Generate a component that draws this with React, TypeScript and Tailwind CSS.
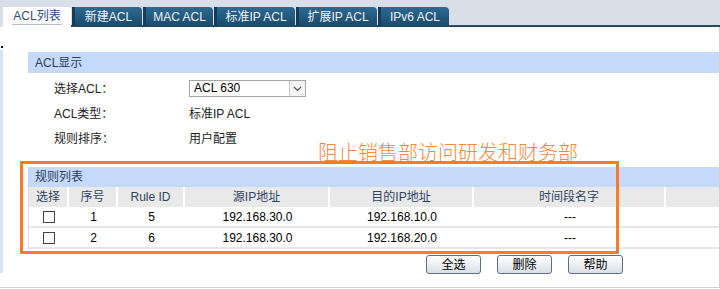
import React from "react";

const FONT = { fontFamily: '"Liberation Sans", "Noto Sans CJK SC", sans-serif' };

const TABS = [
  { label: "新建ACL", w: "w-[70px]" },
  { label: "MAC ACL", w: "w-[70px]" },
  { label: "标准IP ACL", w: "w-[81px]" },
  { label: "扩展IP ACL", w: "w-[81px]" },
  { label: "IPv6 ACL", w: "w-[71px]" },
];

const COLS = [
  { label: "选择", w: "w-[40px]" },
  { label: "序号", w: "w-[49px]" },
  { label: "Rule ID", w: "w-[67px]" },
  { label: "源IP地址", w: "w-[145px]" },
  { label: "目的IP地址", w: "w-[144px]" },
  { label: "时间段名字", w: "w-[192px]" },
  { label: "", w: "flex-1" },
];

const RULES = [
  { no: "1", id: "5", src: "192.168.30.0", dst: "192.168.10.0", time: "---" },
  { no: "2", id: "6", src: "192.168.30.0", dst: "192.168.20.0", time: "---" },
];

function Button({ children }: { children: React.ReactNode }) {
  return (
    <button className="w-[55px] h-[19px] rounded-[3px] border border-[#5b6f86] bg-gradient-to-b from-white to-[#d9dfe6] text-[12px] text-black leading-none shadow-[inset_0_1px_0_#fff]">
      {children}
    </button>
  );
}

export default function App() {
  return (
    <div className="w-[720px] h-[289px] bg-white text-[12px] text-[#222] overflow-hidden" style={FONT}>
      {/* Tabs */}
      <div className="flex items-end h-[27px] bg-[#d9dfe8] pl-[3px]">
        <div className="w-[68px] h-[20px] bg-white flex flex-col items-center justify-center text-[#2b4a78] rounded-tr-[3px]">
          <span className="border-b border-[#b9bfc8] leading-[15px] px-[1px]">ACL列表</span>
        </div>
        <div className="flex-1 flex items-end border-b-2 border-[#274a63] h-[20px]">
          <div className="flex gap-[1px] pl-[1px] h-[19px] -mb-[1px]">
            {TABS.map((t) => (
              <div
                key={t.label}
                className={`${t.w} h-full flex items-center justify-center text-[#eef3f8] bg-gradient-to-b from-[#2e6a93] to-[#1a4a6b] rounded-tr-[4px] border-l-[3px] border-[#163c57]`}
              >
                {t.label}
              </div>
            ))}
          </div>
        </div>
      </div>

      {/* Content */}
      <div className="relative flex h-[261px] border-r border-b border-[#d2d2d2]">
        <div className="w-[3px] flex flex-col">
          <div className="w-[2px] h-[2px] bg-black mt-[19px] ml-[1px]" />
          <div className="w-[3px] h-[223px] bg-[#d6e4fb] mt-[2px]" />
        </div>

        <div className="flex-1 pl-[25px]">
          <div className="mt-[25px] h-[21px] bg-[#c5d9fa] flex items-center pl-[7px] text-[#2a3e58]">ACL显示</div>

          <div className="mt-[3px] pl-[26px]">
            <div className="flex items-center h-[25px]">
              <span className="w-[135px]">选择ACL：</span>
              <div className="flex w-[117px] h-[17px] border border-[#a5a5a5] bg-white">
                <span className="flex-1 pl-[4px] leading-[15px] text-black">ACL 630</span>
                <span className="w-[16px] border-l border-[#c8c8c8] bg-[#f4f4f4] flex items-center justify-center">
                  <svg width="9" height="6" viewBox="0 0 9 6">
                    <path d="M1 1 L4.5 4.5 L8 1" fill="none" stroke="#555" strokeWidth="1.2" />
                  </svg>
                </span>
              </div>
            </div>
            <div className="flex items-center h-[25px]">
              <span className="w-[135px]">ACL类型：</span>
              <span>标准IP ACL</span>
            </div>
            <div className="flex items-center h-[25px]">
              <span className="w-[135px]">规则排序：</span>
              <span>用户配置</span>
            </div>
          </div>

          {/* Rule table */}
          <div className="mt-[16px] h-[20px] bg-[#c5d9fa] flex items-center pl-[7px] text-[#2a3e58]">规则列表</div>
          <div className="border-l border-[#dadada]">
            <div className="flex h-[20px] bg-white">
              {COLS.map((c, i) => (
                <div
                  key={i}
                  className={`${c.w} bg-[#e9e9e9] flex items-center justify-center text-[#2d4566] ${i < COLS.length - 1 ? "border-r-2 border-white" : ""}`}
                >
                  {c.label}
                </div>
              ))}
            </div>
            {RULES.map((r) => (
              <div key={r.no} className="flex h-[21px] border-b-2 border-[#e6e6e6] text-black">
                <div className="w-[40px] flex items-center justify-center">
                  <span className="w-[12px] h-[12px] border border-[#444] bg-white" />
                </div>
                <div className="w-[49px] flex items-center justify-center">{r.no}</div>
                <div className="w-[67px] flex items-center justify-center">{r.id}</div>
                <div className="w-[145px] flex items-center justify-center">{r.src}</div>
                <div className="w-[144px] flex items-center justify-center">{r.dst}</div>
                <div className="w-[192px] flex items-center justify-center">{r.time}</div>
                <div className="flex-1" />
              </div>
            ))}
          </div>

          <div className="flex gap-[16px] mt-[6px] pl-[398px]">
            <Button>全选</Button>
            <Button>删除</Button>
            <Button>帮助</Button>
          </div>
        </div>

        {/* Annotation */}
        <div
          className="absolute left-[318px] top-[113px] text-[20px] leading-[24px] font-light text-[#f7873a]"
          style={{ fontFamily: '"Noto Sans CJK SC", sans-serif' }}
        >
          阻止销售部访问研发和财务部
        </div>
        <div className="absolute left-[20px] top-[134px] w-[599px] h-[93px] border-[3px] border-[#fb7b26]" />
      </div>
    </div>
  );
}
